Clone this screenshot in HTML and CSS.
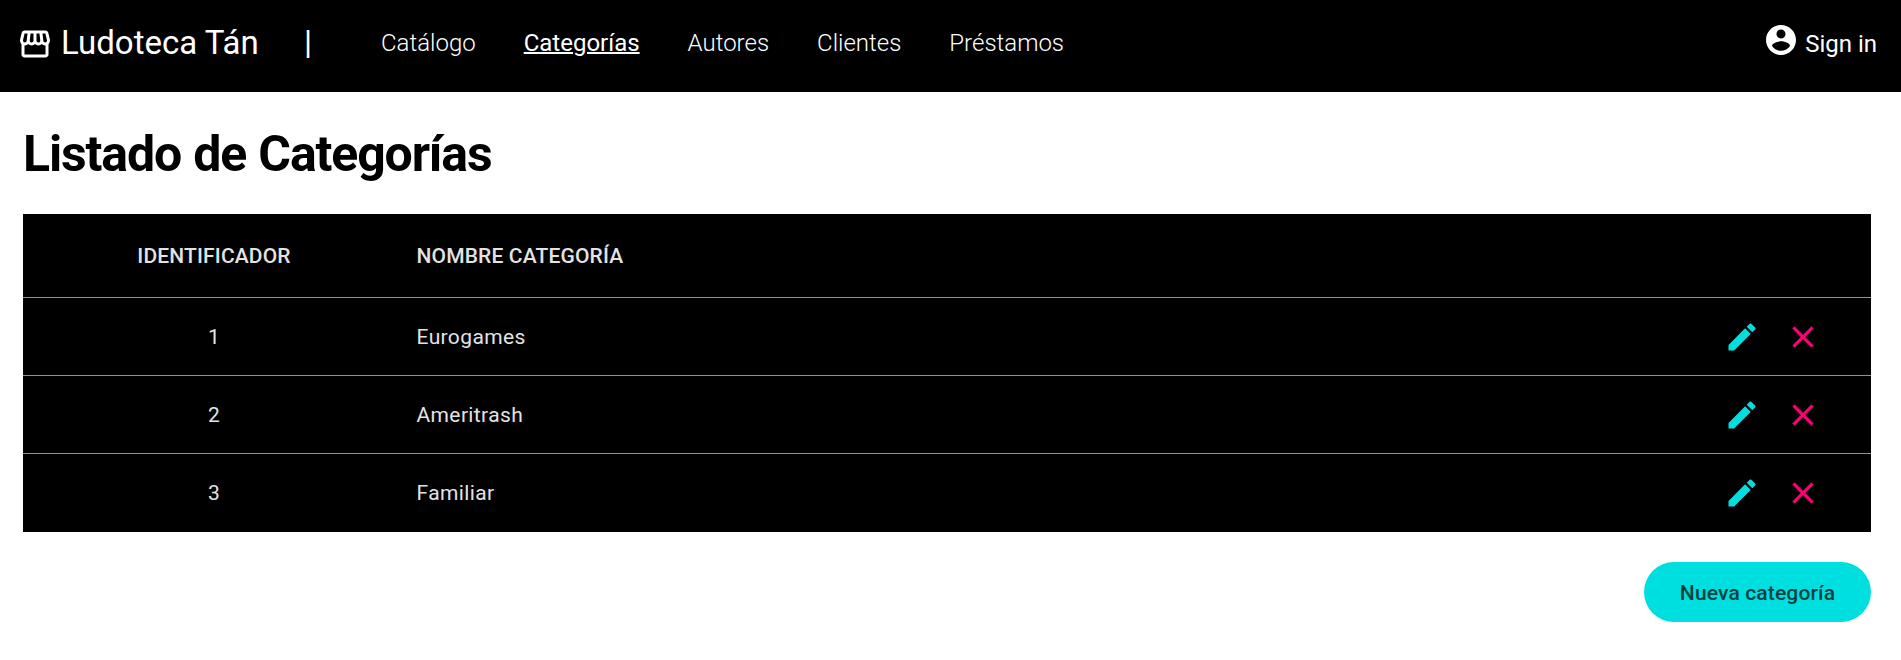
FILE: index.html
```html
<!DOCTYPE html>
<html lang="es">
<head>
<meta charset="utf-8">
<title>Ludoteca Tán</title>
<link rel="stylesheet" href="styles.css">
</head>
<body>
<svg class="sprite" aria-hidden="true">
  <symbol id="edit" viewBox="0 0 24 24"><path d="M3 17.25V21h3.75L17.81 9.94l-3.75-3.75L3 17.25zM20.71 7.04c.39-.39.39-1.02 0-1.41l-2.34-2.34c-.39-.39-1.02-.39-1.41 0l-1.83 1.83 3.75 3.75 1.83-1.83z"/></symbol>
  <symbol id="clear" viewBox="0 0 24 24"><path d="M19 6.41L17.59 5 12 10.59 6.41 5 5 6.41 10.59 12 5 17.59 6.41 19 12 13.41 17.59 19 19 17.59 13.41 12z"/></symbol>
</svg>
<header class="toolbar">
  <div class="brand">
    <svg class="icon" viewBox="0 0 24 24"><path d="M21.9 8.89l-1.05-4.37c-.22-.9-1-1.52-1.91-1.52H5.05c-.9 0-1.69.63-1.9 1.52L2.1 8.89c-.24 1.02-.02 2.06.62 2.88.08.11.19.19.28.29V19c0 1.1.9 2 2 2h14c1.1 0 2-.9 2-2v-6.94c.09-.09.2-.18.28-.28.64-.82.87-1.87.62-2.89zm-2.99-3.9l1.05 4.37c.1.42.01.84-.25 1.17-.14.18-.44.47-.94.47-.61 0-1.14-.49-1.21-1.14L16.98 5l1.93-.01zM13 5h1.96l.54 4.52c.05.39-.07.78-.33 1.07-.22.26-.54.41-.95.41-.67 0-1.22-.59-1.22-1.31V5zM8.49 9.52L9.04 5H11v4.69c0 .72-.55 1.31-1.29 1.31-.34 0-.65-.15-.89-.41-.25-.29-.37-.68-.33-1.07zm-4.45-.16L5.05 5h1.97l-.58 4.86c-.08.65-.6 1.14-1.21 1.14-.49 0-.8-.29-.93-.47-.27-.32-.36-.75-.26-1.17zM5 19v-6.03c.08.01.15.03.23.03.87 0 1.66-.36 2.24-.95.6.6 1.4.95 2.31.95.87 0 1.65-.36 2.23-.93.59.57 1.39.93 2.29.93.84 0 1.64-.35 2.24-.95.58.59 1.37.95 2.24.95.08 0 .15-.02.23-.03V19H5z"/></svg>
    <span class="brand-name">Ludoteca Tán</span>
    <span class="divider">|</span>
  </div>
  <nav class="menu">
    <a class="link">Catálogo</a>
    <a class="link active">Categorías</a>
    <a class="link">Autores</a>
    <a class="link">Clientes</a>
    <a class="link">Préstamos</a>
  </nav>
  <div class="login">
    <svg class="icon" viewBox="0 0 24 24"><path d="M12 2C6.48 2 2 6.48 2 12s4.48 10 10 10 10-4.48 10-10S17.52 2 12 2zm0 3c1.66 0 3 1.34 3 3s-1.34 3-3 3-3-1.34-3-3 1.34-3 3-3zm0 14.2c-2.5 0-4.71-1.28-6-3.22.03-1.99 4-3.08 6-3.08 1.99 0 5.97 1.09 6 3.08-1.29 1.94-3.5 3.22-6 3.22z"/></svg>
    <span class="login-text">Sign in</span>
  </div>
</header>
<main class="container">
  <h1 class="title">Listado de Categorías</h1>
  <div class="table">
    <div class="row head"><span class="id">IDENTIFICADOR</span><span class="name">NOMBRE CATEGORÍA</span></div>
    <div class="row"><span class="id">1</span><span class="name">Eurogames</span><span class="actions"><svg class="icon edit"><use href="#edit"/></svg><svg class="icon clear"><use href="#clear"/></svg></span></div>
    <div class="row"><span class="id">2</span><span class="name">Ameritrash</span><span class="actions"><svg class="icon edit"><use href="#edit"/></svg><svg class="icon clear"><use href="#clear"/></svg></span></div>
    <div class="row"><span class="id">3</span><span class="name">Familiar</span><span class="actions"><svg class="icon edit"><use href="#edit"/></svg><svg class="icon clear"><use href="#clear"/></svg></span></div>
  </div>
  <div class="buttons"><button class="new">Nueva categoría</button></div>
</main>
</body>
</html>
```
FILE: styles.css
```css
* { box-sizing: border-box; }
body { margin: 0; background: #fff; font-family: Roboto, sans-serif; color: #000; }
.sprite { display: none; }
.icon { width: 36px; height: 36px; fill: currentColor; flex: none; display: block; }

.toolbar { height: 92px; background: #000; color: #fff; display: flex; padding: 0 24px 4px 17px; align-items: center; white-space: nowrap; }
.brand { display: flex; align-items: center; width: 364px; font-size: 33px; line-height: 40px; }
.brand-name { margin-left: 8px; width: 243px; padding-bottom: 2px; }
.divider { padding-bottom: 2px; }
.menu { display: flex; gap: 48px; font-size: 24px; font-weight: 300; padding-bottom: 2px; }
.active { font-weight: 400; text-decoration: underline; text-decoration-thickness: 2px; }
.login { display: flex; align-items: center; margin-left: auto; font-size: 24px; gap: 6px; }
.login .icon { margin-bottom: 8px; }

.container { padding: 0 30px 0 23px; }
.title { margin: 0; height: 122px; padding-top: 32px; font-size: 50px; line-height: 60px; font-weight: 700; letter-spacing: -1.15px; word-spacing: 1px; white-space: nowrap; }
.table { background: #000; color: #e3e3e3; font-size: 21px; letter-spacing: .375px; }
.row { height: 78px; display: grid; grid-template-columns: 370px 1fr auto; align-items: center; border-bottom: 1px solid #919191; }
.row:last-child { border-bottom-color: #000; }
.head { height: 84px; font-weight: 500; letter-spacing: .15px; }
.id { text-align: center; padding-left: 12px; }
.name { padding-left: 23.5px; }
.actions { display: flex; gap: 24.5px; padding-right: 50.5px; }
.edit { color: #00dfdf; }
.clear { color: #ff0076; stroke: currentColor; stroke-width: .2px; }
.buttons { display: flex; justify-content: flex-end; padding-top: 30px; }
.new { width: 227px; height: 60px; border: 0; border-radius: 30px; background: #00dfdf; color: #004141; font: 500 21px Roboto, sans-serif; letter-spacing: .15px; padding: 2px 0 0; }
```
